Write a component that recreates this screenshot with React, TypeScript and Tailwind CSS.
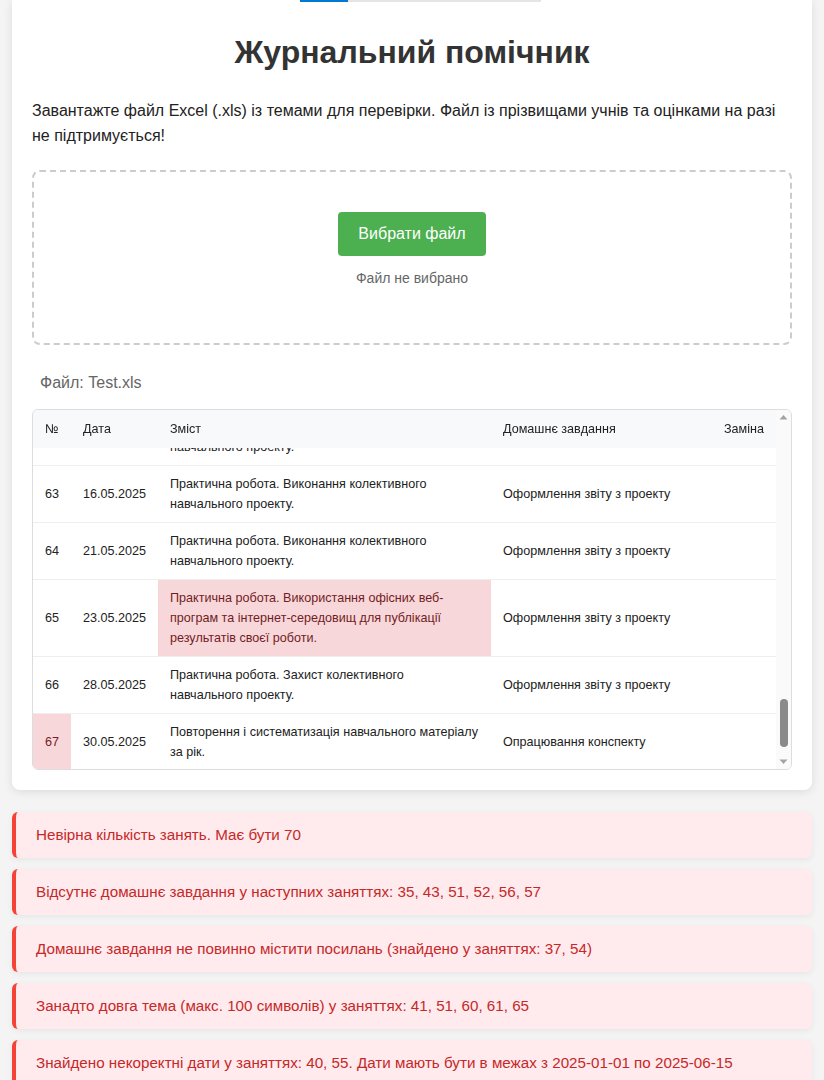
import { useEffect, useRef } from "react";

type Lesson = {
    num: number;
    date: string;
    topic: string;
    homework: string;
    replace?: string;
    badTopic?: boolean;
    badNum?: boolean;
};

const shortTopics = [
    "Інструктаж з БЖД. Вступ до курсу.",
    "Комп'ютерні мережі та їх види.",
    "Локальні мережі. Обладнання.",
    "Глобальна мережа Інтернет.",
    "Пошук інформації в Інтернеті.",
    "Електронна пошта. Листування.",
    "Хмарні технології.",
    "Практична робота. Хмарні сервіси.",
    "Створення презентацій.",
    "Алгоритми та їх властивості.",
    "Змінні та типи даних.",
    "Розгалуження в алгоритмах.",
    "Цикли з лічильником.",
    "Практична робота. Цикли.",
    "Бази даних. Основні поняття.",
    "Таблиці та запити.",
];

const homeworks = [
    "Опрацювання конспекту",
    "§ 1, с. 10–15",
    "Повторити терміни",
    "Опрацювання конспекту",
    "Підготувати повідомлення",
];

function buildLessons(): Lesson[] {
    const list: Lesson[] = [];
    for (let i = 1; i <= 61; i++) {
        const day = ((i * 3) % 27) + 1;
        const month = Math.min(5, 1 + Math.floor((i - 1) / 13));
        list.push({
            num: i,
            date: `${String(day).padStart(2, "0")}.${String(month).padStart(2, "0")}.2025`,
            topic: shortTopics[i % shortTopics.length],
            homework: homeworks[i % homeworks.length],
        });
    }
    list.push(
        {
            num: 62,
            date: "14.05.2025",
            topic: "Практична робота. Виконання колективного навчального проекту.",
            homework: "Оформлення звіту з проекту",
        },
        {
            num: 63,
            date: "16.05.2025",
            topic: "Практична робота. Виконання колективного навчального проекту.",
            homework: "Оформлення звіту з проекту",
        },
        {
            num: 64,
            date: "21.05.2025",
            topic: "Практична робота. Виконання колективного навчального проекту.",
            homework: "Оформлення звіту з проекту",
        },
        {
            num: 65,
            date: "23.05.2025",
            topic: "Практична робота. Використання офісних веб-програм та інтернет-середовищ для публікації результатів своєї роботи.",
            homework: "Оформлення звіту з проекту",
            badTopic: true,
        },
        {
            num: 66,
            date: "28.05.2025",
            topic: "Практична робота. Захист колективного навчального проекту.",
            homework: "Оформлення звіту з проекту",
        },
        {
            num: 67,
            date: "30.05.2025",
            topic: "Повторення і систематизація навчального матеріалу за рік.",
            homework: "Опрацювання конспекту",
            badNum: true,
        }
    );
    return list;
}

const errors = [
    "Невірна кількість занять. Має бути 70",
    "Відсутнє домашнє завдання у наступних заняттях: 35, 43, 51, 52, 56, 57",
    "Домашнє завдання не повинно містити посилань (знайдено у заняттях: 37, 54)",
    "Занадто довга тема (макс. 100 символів) у заняттях: 41, 51, 60, 61, 65",
    "Знайдено некоректні дати у заняттях: 40, 55. Дати мають бути в межах з 2025-01-01 по 2025-06-15",
];

export default function App() {
    const lessons = buildLessons();
    const scrollRef = useRef<HTMLDivElement>(null);

    useEffect(() => {
        // table is shown scrolled almost to the end
        const el = scrollRef.current;
        if (el) {
            el.scrollTop = el.scrollHeight - el.clientHeight - 1;
        }
    }, []);

    return (
        <div className="min-h-screen bg-[#f4f4f4] font-[family-name:Liberation_Sans,Arial,sans-serif] pb-10">
            <div className="mx-auto max-w-[800px]">
                {/* Main card */}
                <div className="bg-white rounded-b-lg shadow-[0_2px_10px_rgba(0,0,0,0.1)] px-5 pb-5">
                    {/* Tabs underline */}
                    <div className="flex ml-[268px]">
                        <div className="w-[48px] h-[2px] bg-[#0078d4]" />
                        <div className="w-[193px] h-[2px] bg-[#e5e5e5]" />
                    </div>

                    <h1 className="mt-[32px] text-center text-[32px] leading-[37px] font-bold text-[#333]">
                        Журнальний помічник
                    </h1>

                    <p className="mt-[27px] text-[16px] leading-[25px] text-[#222]">
                        Завантажте файл Excel (.xls) із темами для перевірки. Файл із прізвищами учнів та оцінками на разі не підтримується!
                    </p>

                    {/* Upload area */}
                    <div className="mt-[22px] border-2 border-dashed border-[#ccc] rounded-lg pt-[40px] pb-[55px] flex flex-col items-center">
                        <button className="bg-[#4caf50] text-white text-[16px] leading-[20px] px-5 py-3 rounded">
                            Вибрати файл
                        </button>
                        <div className="mt-[12px] text-[14px] leading-[20px] text-[#666]">Файл не вибрано</div>
                    </div>

                    <div className="mt-[28px] pl-2 text-[16px] leading-[20px] text-[#666]">Файл: Test.xls</div>

                    {/* Table with scrollbar */}
                    <div className="mt-[16px] h-[361px] flex border border-[#ddd] rounded-md overflow-hidden">
                        <div ref={scrollRef} className="flex-1 overflow-hidden">
                            <table className="w-full table-fixed border-collapse text-[12.6px] leading-[20px] text-[#222]">
                                <colgroup>
                                    <col className="w-[38px]" />
                                    <col className="w-[87px]" />
                                    <col className="w-[333px]" />
                                    <col className="w-[221px]" />
                                    <col />
                                </colgroup>
                                <thead>
                                    <tr>
                                        {["№", "Дата", "Зміст", "Домашнє завдання", "Заміна"].map((h) => (
                                            <th
                                                key={h}
                                                className="sticky top-0 z-10 bg-[#f8f9fa] text-left font-normal px-3 py-[9px] shadow-[0_1px_0_#eee]"
                                            >
                                                {h}
                                            </th>
                                        ))}
                                    </tr>
                                </thead>
                                <tbody>
                                    {lessons.map((l) => (
                                        <tr key={l.num} className="border-b border-[#eee] last:border-b-0">
                                            <td
                                                className={
                                                    l.badNum
                                                        ? "px-3 py-2 bg-[#f8d7da] text-[#721c24]"
                                                        : "px-3 py-2"
                                                }
                                            >
                                                {l.num}
                                            </td>
                                            <td className="px-3 py-2">{l.date}</td>
                                            <td
                                                className={
                                                    l.badTopic
                                                        ? "px-3 py-2 bg-[#f8d7da] text-[#721c24]"
                                                        : "px-3 py-2"
                                                }
                                            >
                                                {l.topic}
                                            </td>
                                            <td className="px-3 py-2">{l.homework}</td>
                                            <td className="px-3 py-2">{l.replace ?? ""}</td>
                                        </tr>
                                    ))}
                                </tbody>
                            </table>
                        </div>

                        {/* Scrollbar */}
                        <div className="w-[15px] bg-[#fafafa] flex flex-col items-center">
                            <svg width="15" height="15" viewBox="0 0 15 15" className="shrink-0">
                                <path d="M3.5 9.5 L7.5 5 L11.5 9.5 Z" fill="#a3a3a3" />
                            </svg>
                            <div className="flex-1 w-full flex flex-col items-center pt-[274px]">
                                <div className="w-[8px] h-[48px] rounded-full bg-[#8a8a8a]" />
                            </div>
                            <svg width="15" height="15" viewBox="0 0 15 15" className="shrink-0">
                                <path d="M3.5 5.5 L7.5 10 L11.5 5.5 Z" fill="#a3a3a3" />
                            </svg>
                        </div>
                    </div>
                </div>

                {/* Validation errors */}
                <div className="mt-[22px] flex flex-col gap-[11px]">
                    {errors.map((e) => (
                        <div
                            key={e}
                            className="bg-[#ffebee] border-l-4 border-[#f44336] rounded-md shadow-[0_2px_6px_rgba(0,0,0,0.06)] pl-5 pr-4 py-3 text-[15.2px] leading-[22px] text-[#c62828]"
                        >
                            {e}
                        </div>
                    ))}
                </div>
            </div>
        </div>
    );
}
